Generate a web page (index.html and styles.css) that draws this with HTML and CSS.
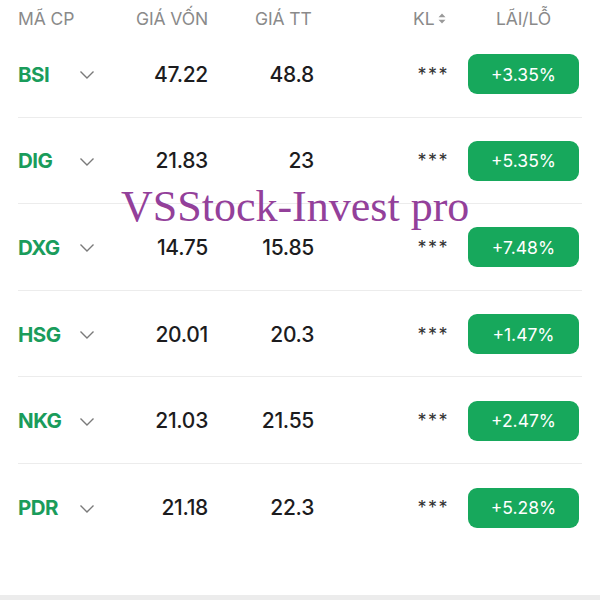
FILE: index.html
```html
<!DOCTYPE html>
<html lang="vi">
<head>
<meta charset="utf-8">
<link rel="stylesheet" href="styles.css">
</head>
<body>
<div class="page">
  <div class="table">
    <div class="row head">
      <div class="c-code">MÃ CP</div>
      <div class="c-cost">GIÁ VỐN</div>
      <div class="c-price">GIÁ TT</div>
      <div class="c-kl">KL<svg class="sort" width="8" height="11" viewBox="0 0 8 11"><path d="M4 0.5 L7.5 4.3 H0.5 Z M4 10.5 L7.5 6.7 H0.5 Z" fill="#9a9a9a"/></svg></div>
      <div class="c-pl">LÃI/LỖ</div>
    </div>
    <div class="row item">
      <div class="tick">BSI</div>
      <div class="chev"><svg width="16" height="10" viewBox="0 0 16 10"><path d="M1.5 1.5 L8 8 L14.5 1.5" fill="none" stroke="#7a7a7a" stroke-width="1.4"/></svg></div>
      <div class="c-cost num">47.22</div>
      <div class="c-price num">48.8</div>
      <div class="c-kl stars">***</div>
      <div class="c-pl"><span class="badge">+3.35%</span></div>
    </div>
    <div class="row item">
      <div class="tick">DIG</div>
      <div class="chev"><svg width="16" height="10" viewBox="0 0 16 10"><path d="M1.5 1.5 L8 8 L14.5 1.5" fill="none" stroke="#7a7a7a" stroke-width="1.4"/></svg></div>
      <div class="c-cost num">21.83</div>
      <div class="c-price num">23</div>
      <div class="c-kl stars">***</div>
      <div class="c-pl"><span class="badge">+5.35%</span></div>
    </div>
    <div class="row item">
      <div class="tick">DXG</div>
      <div class="chev"><svg width="16" height="10" viewBox="0 0 16 10"><path d="M1.5 1.5 L8 8 L14.5 1.5" fill="none" stroke="#7a7a7a" stroke-width="1.4"/></svg></div>
      <div class="c-cost num">14.75</div>
      <div class="c-price num">15.85</div>
      <div class="c-kl stars">***</div>
      <div class="c-pl"><span class="badge">+7.48%</span></div>
    </div>
    <div class="row item">
      <div class="tick">HSG</div>
      <div class="chev"><svg width="16" height="10" viewBox="0 0 16 10"><path d="M1.5 1.5 L8 8 L14.5 1.5" fill="none" stroke="#7a7a7a" stroke-width="1.4"/></svg></div>
      <div class="c-cost num">20.01</div>
      <div class="c-price num">20.3</div>
      <div class="c-kl stars">***</div>
      <div class="c-pl"><span class="badge">+1.47%</span></div>
    </div>
    <div class="row item">
      <div class="tick">NKG</div>
      <div class="chev"><svg width="16" height="10" viewBox="0 0 16 10"><path d="M1.5 1.5 L8 8 L14.5 1.5" fill="none" stroke="#7a7a7a" stroke-width="1.4"/></svg></div>
      <div class="c-cost num">21.03</div>
      <div class="c-price num">21.55</div>
      <div class="c-kl stars">***</div>
      <div class="c-pl"><span class="badge">+2.47%</span></div>
    </div>
    <div class="row item last">
      <div class="tick">PDR</div>
      <div class="chev"><svg width="16" height="10" viewBox="0 0 16 10"><path d="M1.5 1.5 L8 8 L14.5 1.5" fill="none" stroke="#7a7a7a" stroke-width="1.4"/></svg></div>
      <div class="c-cost num">21.18</div>
      <div class="c-price num">22.3</div>
      <div class="c-kl stars">***</div>
      <div class="c-pl"><span class="badge">+5.28%</span></div>
    </div>
  </div>
  <div class="watermark">VSStock-Invest pro</div>
  <div class="footer"></div>
</div>
</body>
</html>
```
FILE: styles.css
```css
* { box-sizing: border-box; }
html, body { margin: 0; padding: 0; background: #fff; }
body { font-family: Inter, Roboto, "Noto Sans", sans-serif; color: #1d1d1f; }
.page { position: relative; width: 600px; height: 600px; overflow: hidden; display: flex; flex-direction: column; }
.table { padding: 0 18px; flex: 1; }
.row {
  display: grid;
  grid-template-columns: 58px 24px 110px 104px 134px 131px;
  align-items: center;
}
.head { height: 31px; padding-top: 5px; font-size: 17.5px; color: #8a8a8a; letter-spacing: -0.1px; white-space: nowrap; }
.head .c-code { grid-column: 1 / span 2; }
.head .c-cost { padding-left: 36px; }
.head .c-price { padding-left: 45px; }
.head .c-kl { padding-left: 99px; display: flex; align-items: center; gap: 4px; }
.head .c-pl { text-align: center; padding-left: 20px; }
.sort { margin-top: 1px; }
.item { height: 86.6px; padding-top: 1px; border-bottom: 1px solid #ececec; }
.item.last { border-bottom: none; }
.tick { font-weight: 700; font-size: 20.5px; color: #1a9c5b; letter-spacing: -0.5px; }
.chev { display: flex; align-items: center; padding-left: 3px; padding-top: 2px; }
.num { text-align: right; font-size: 21px; font-weight: 500; color: #1c1c1e; letter-spacing: -0.3px; }
.c-cost.num { padding-right: 2px; }
.stars { text-align: right; font-size: 18px; color: #333; letter-spacing: 1.5px; margin-right: -1px; }
.item .c-pl { padding-left: 20px; }
.badge {
  display: flex; align-items: center; justify-content: center;
  width: 111px; height: 40px; border-radius: 9px;
  background: #17a85c; color: #fff; font-size: 17.5px; font-weight: 400;
}
.watermark {
  position: absolute; left: 121px; top: 181px;
  font-family: "Liberation Serif", "Times New Roman", serif;
  font-size: 44px; color: #93409a; white-space: nowrap; line-height: 1.2;
}
.footer { height: 5px; background: #ececec; }
```
